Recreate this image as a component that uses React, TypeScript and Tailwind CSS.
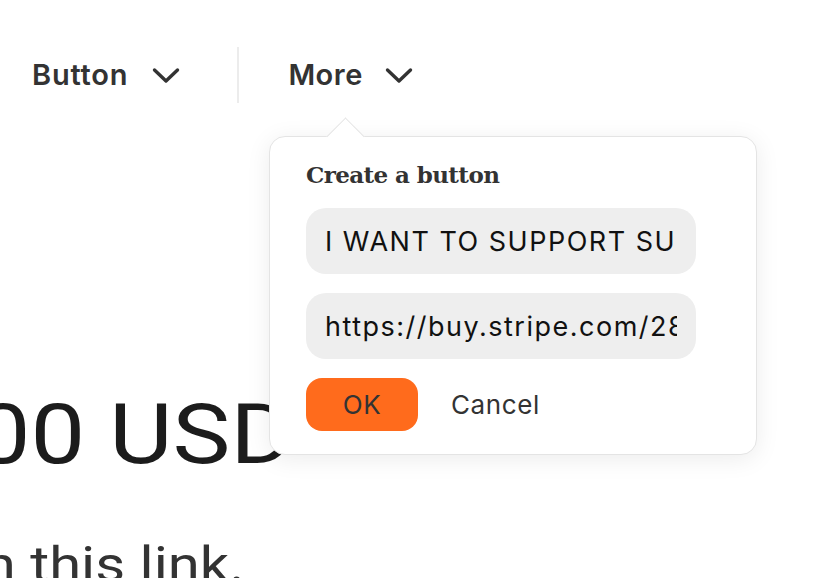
import { useState } from "react";

const Chevron = () => (
  <svg width="28" height="17" viewBox="0 0 28 17" fill="none" className="shrink-0">
    <path
      d="M2.5 3 L14 14 L25.5 3"
      stroke="#333333"
      strokeWidth="3.4"
      strokeLinecap="round"
      strokeLinejoin="round"
    />
  </svg>
);

const App = () => {
  const [label, setLabel] = useState("I WANT TO SUPPORT SUBSTACK");
  const [url, setUrl] = useState("https://buy.stripe.com/28o5lQ");

  return (
    <div className="relative h-[578px] w-[820px] overflow-hidden bg-white font-['Inter',sans-serif]">
      {/* toolbar */}
      <div className="mt-[47px] flex h-[56px] items-center pl-8 text-[#333333]">
        <button className="flex items-center gap-6 text-[29px] font-semibold tracking-[0.8px]">
          Button
          <Chevron />
        </button>
        <div className="ml-[57px] mr-[49px] h-[56px] w-[2px] bg-[#ececec]" />
        <button className="flex items-center gap-[22px] text-[29px] font-semibold tracking-[0.5px]">
          More
          <Chevron />
        </button>
      </div>

      {/* page behind the popover */}
      <div className="mt-[290px] origin-left scale-x-[1.16] font-['Roboto',sans-serif]">
        <p className="-ml-[21px] whitespace-nowrap text-[84px] leading-[84px] text-[#1c1c1c]">
          00 USD
        </p>
        <p className="mt-[63px] -ml-[14px] whitespace-nowrap text-[50px] leading-[50px] text-[#333333]">
          n this link.
        </p>
      </div>

      {/* popover */}
      <div className="absolute left-[269px] top-[136px] h-[319px] w-[488px] rounded-[16px] border border-[#e4e4e4] bg-white shadow-[0_4px_24px_rgba(0,0,0,0.08)]">
        <div className="absolute -top-[14px] left-[62px] h-[27px] w-[27px] rotate-45 border-l border-t border-[#e4e4e4] bg-white" />
        <div className="relative flex flex-col px-[36px] pt-[22px]">
          <h3 className="font-['DejaVu_Serif',serif] text-[23px] font-bold leading-[32px] tracking-[-0.6px] text-[#333333]">
            Create a button
          </h3>
          <input
            value={label}
            onChange={(e) => setLabel(e.target.value)}
            className="mt-[17px] h-[66px] w-[390px] rounded-[20px] bg-[#eeeeee] px-[19px] text-[27px] tracking-[1.5px] text-[#111111] outline-none"
          />
          <input
            value={url}
            onChange={(e) => setUrl(e.target.value)}
            className="mt-[19px] h-[66px] w-[390px] rounded-[20px] bg-[#eeeeee] px-[19px] text-[27px] tracking-[1.5px] text-[#111111] outline-none"
          />
          <div className="mt-[19px] flex items-center gap-[33px]">
            <button className="h-[53px] w-[112px] rounded-[16px] bg-[#ff6b1c] text-[26px] tracking-[0.5px] text-[#333333]">
              OK
            </button>
            <button className="text-[26px] tracking-[0.6px] text-[#333333]">Cancel</button>
          </div>
        </div>
      </div>
    </div>
  );
};

export default App;
